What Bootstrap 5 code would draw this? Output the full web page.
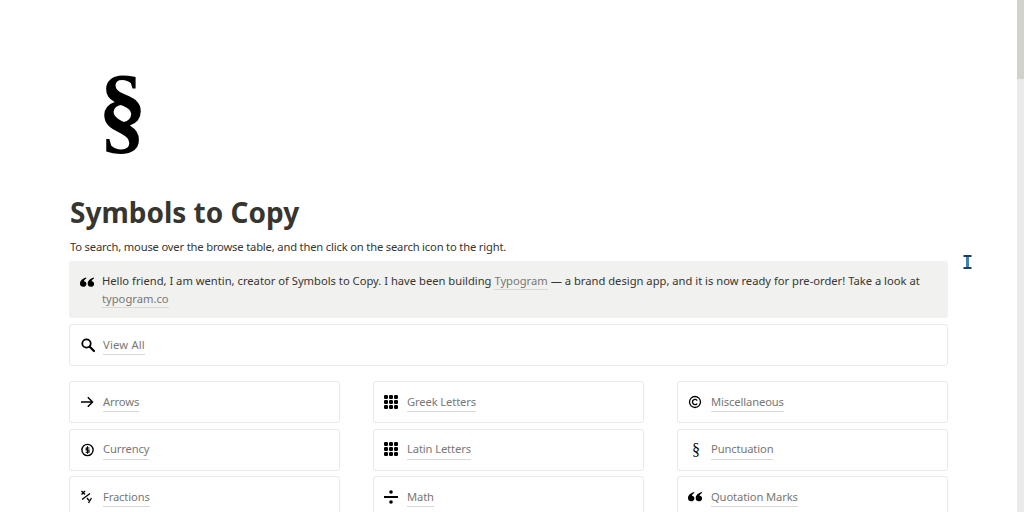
<!DOCTYPE html>
<html lang="en">

<head>
    <meta charset="UTF-8" />
    <meta name="viewport" content="width=device-width, initial-scale=1" />
    <title>Symbols to Copy</title>
    <link href="https://cdn.jsdelivr.net/npm/bootstrap@5.3.0/dist/css/bootstrap.min.css" rel="stylesheet" />
    <style>
        html, body {
            height: 512px;
            overflow: hidden;
        }

        body {
            font-family: "Noto Sans", "Open Sans", sans-serif;
            color: #37352f;
            background: #fff;
        }

        .page-main {
            width: 1017px;
            height: 512px;
            overflow: hidden;
            padding: 72px 69px 0 69px;
        }

        .page-icon {
            height: 84px;
            margin-left: 29px;
            font-family: "Liberation Serif", serif;
            font-weight: 700;
            font-size: 98px;
            line-height: 74px;
            color: #000;
        }

        .page-title {
            font-size: 28px;
            font-weight: 700;
            line-height: 38px;
            margin: 37px 0 0 1px;
        }

        .page-desc {
            font-size: 11.2px;
            letter-spacing: -0.17px;
            line-height: 18px;
            margin: 7px 0 0 1px;
            height: 23px;
        }

        .quote-box {
            background: #f1f1ef;
            border-radius: 3px;
            height: 57px;
            padding: 11px 12px 0 11px;
            font-size: 11.2px;
            line-height: 17.5px;
            margin-bottom: 6px;
        }

        .quote-text {
            color: #37352f;
        }

        .soft-link {
            color: #787774;
            text-decoration: none;
            border-bottom: 1px solid #d9d8d5;
            padding-bottom: 1px;
        }

        .link-tile {
            height: 42px;
            border: 1px solid #e9e9e7;
            border-radius: 3px;
            padding: 0 11px;
            font-size: 11.2px;
            letter-spacing: -0.12px;
            background: #fff;
        }

        .link-tile .soft-link {
            margin-top: 2px;
        }

        .tile-icon {
            width: 22px;
            flex: 0 0 22px;
        }

        .tile-shift {
            padding-left: 10px;
        }

        .tile-shift .tile-icon {
            width: 23px;
            flex-basis: 23px;
        }

        .serif-icon {
            font-family: "Liberation Serif", serif;
            font-size: 16px;
            line-height: 16px;
            color: #000;
            padding-left: 3px;
        }

        .tile-wide {
            margin-bottom: 15px;
            letter-spacing: 0.2px;
        }

        .tile-grid {
            display: grid;
            grid-template-columns: repeat(3, 271px);
            column-gap: 33px;
            row-gap: 5.5px;
        }

        .scroll-track {
            width: 7px;
            height: 512px;
            background: #ebeae8;
        }

        .scroll-thumb {
            height: 79px;
            background: #d3d1cb;
        }

        .text-cursor {
            position: absolute;
            left: 963px;
            top: 255px;
        }
    </style>
</head>

<body>
    <div class="d-flex">
        <main class="page-main">
            <div class="page-icon">§</div>
            <h1 class="page-title">Symbols to Copy</h1>
            <p class="page-desc">To search, mouse over the browse table, and then click on the search icon to the right.</p>

            <div class="quote-box d-flex">
                <div class="tile-icon">
                    <svg width="15" height="18" viewBox="0 0 15 18"><path d="M6 4.500 C2.500 5.500 0 7.800 0 10.500 C0 12.700 1.300 13.800 3.200 13.800 C5 13.800 6.400 12.600 6.400 10.900 C6.400 9.300 5.300 8.300 3.900 8.300 C4.100 7.200 5 6.200 6.400 5.500 Z M13.700 4.500 C10.200 5.500 7.700 7.800 7.700 10.500 C7.700 12.700 9 13.800 10.900 13.800 C12.700 13.800 14.100 12.600 14.100 10.900 C14.100 9.300 13 8.300 11.600 8.300 C11.800 7.200 12.700 6.200 14.100 5.500 Z" /></svg>
                </div>
                <div class="quote-text">Hello friend, I am wentin, creator of Symbols to Copy. I have been building <a class="soft-link" href="#">Typogram</a> — a brand design app, and it is now ready for pre-order! Take a look at <a class="soft-link" href="#">typogram.co</a></div>
            </div>

            <div class="link-tile tile-wide d-flex align-items-center">
                <div class="tile-icon">
                    <svg width="15" height="15" viewBox="0 0 15 15" class="d-block"><circle cx="5.500" cy="5.500" r="4.200" fill="none" stroke="#000" stroke-width="1.800" /><path d="M8.700 8.700 L13 13" stroke="#000" stroke-width="2.200" stroke-linecap="round" /></svg>
                </div>
                <a class="soft-link" href="#">View All</a>
            </div>

            <div class="tile-grid">
                <div class="link-tile d-flex align-items-center">
                    <div class="tile-icon"><svg width="14" height="14" viewBox="0 0 14 14" class="d-block"><path d="M0 7 H11.500 M6.800 2.300 L11.500 7 L6.800 11.700" fill="none" stroke="#000" stroke-width="1.500" /></svg></div>
                    <a class="soft-link" href="#">Arrows</a>
                </div>
                <div class="link-tile tile-shift d-flex align-items-center">
                    <div class="tile-icon"><svg width="15" height="15" viewBox="0 0 15 15" class="d-block" fill="#000"><rect x="0" y="0" width="4" height="4" rx="1.200" /><rect x="5" y="0" width="4" height="4" rx="1.200" /><rect x="10" y="0" width="4" height="4" rx="1.200" /><rect x="0" y="5" width="4" height="4" rx="1.200" /><rect x="5" y="5" width="4" height="4" rx="1.200" /><rect x="10" y="5" width="4" height="4" rx="1.200" /><rect x="0" y="10" width="4" height="4" rx="1.200" /><rect x="5" y="10" width="4" height="4" rx="1.200" /><rect x="10" y="10" width="4" height="4" rx="1.200" /></svg></div>
                    <a class="soft-link" href="#">Greek Letters</a>
                </div>
                <div class="link-tile tile-shift d-flex align-items-center">
                    <div class="tile-icon"><svg width="14" height="14" viewBox="0 0 14 14" class="d-block"><circle cx="7" cy="7" r="5.500" fill="none" stroke="#000" stroke-width="1.300" /><path d="M9.200 5.500 A2.600 2.600 0 1 0 9.200 8.500" fill="none" stroke="#000" stroke-width="1.300" /></svg></div>
                    <a class="soft-link" href="#">Miscellaneous</a>
                </div>

                <div class="link-tile d-flex align-items-center">
                    <div class="tile-icon"><svg width="14" height="14" viewBox="0 0 14 14" class="d-block"><circle cx="6.500" cy="7" r="5.600" fill="none" stroke="#000" stroke-width="1.400" /><path d="M8.500 5 H5.200 V7 H8 V9.200 H4.600 M6.500 3.200 V10.800" fill="none" stroke="#000" stroke-width="1.100" /></svg></div>
                    <a class="soft-link" href="#">Currency</a>
                </div>
                <div class="link-tile tile-shift d-flex align-items-center">
                    <div class="tile-icon"><svg width="15" height="15" viewBox="0 0 15 15" class="d-block" fill="#000"><rect x="0" y="0" width="4" height="4" rx="1.200" /><rect x="5" y="0" width="4" height="4" rx="1.200" /><rect x="10" y="0" width="4" height="4" rx="1.200" /><rect x="0" y="5" width="4" height="4" rx="1.200" /><rect x="5" y="5" width="4" height="4" rx="1.200" /><rect x="10" y="5" width="4" height="4" rx="1.200" /><rect x="0" y="10" width="4" height="4" rx="1.200" /><rect x="5" y="10" width="4" height="4" rx="1.200" /><rect x="10" y="10" width="4" height="4" rx="1.200" /></svg></div>
                    <a class="soft-link" href="#">Latin Letters</a>
                </div>
                <div class="link-tile d-flex align-items-center">
                    <div class="tile-icon serif-icon">§</div>
                    <a class="soft-link" href="#">Punctuation</a>
                </div>

                <div class="link-tile d-flex align-items-center">
                    <div class="tile-icon"><svg width="14" height="15" viewBox="0 0 14 15" class="d-block"><path d="M0.500 1 L4 4.500 M4 1 L0.500 4.500 M1 9.500 L9 3.500" fill="none" stroke="#000" stroke-width="1.300" /><path d="M6 8 L8 10.500 M10.500 8 L7.500 13" fill="none" stroke="#000" stroke-width="1.300" /></svg></div>
                    <a class="soft-link" href="#">Fractions</a>
                </div>
                <div class="link-tile tile-shift d-flex align-items-center">
                    <div class="tile-icon"><svg width="15" height="14" viewBox="0 0 15 14" class="d-block"><circle cx="7" cy="2" r="1.800" /><rect x="0" y="6" width="14" height="2" /><circle cx="7" cy="12" r="1.800" /></svg></div>
                    <a class="soft-link" href="#">Math</a>
                </div>
                <div class="link-tile tile-shift d-flex align-items-center">
                    <div class="tile-icon"><svg width="15" height="10" viewBox="0 0 15 10" class="d-block"><path d="M6 0 C2.500 1 0 3.300 0 6 C0 8.200 1.300 9.300 3.200 9.300 C5 9.300 6.400 8.100 6.400 6.400 C6.400 4.800 5.300 3.800 3.900 3.800 C4.100 2.700 5 1.700 6.400 1 Z M13.700 0 C10.200 1 7.700 3.300 7.700 6 C7.700 8.200 9 9.300 10.900 9.300 C12.700 9.300 14.100 8.100 14.100 6.400 C14.100 4.800 13 3.800 11.600 3.800 C11.800 2.700 12.700 1.700 14.100 1 Z" /></svg></div>
                    <a class="soft-link" href="#">Quotation Marks</a>
                </div>
            </div>
        </main>
        <div class="scroll-track">
            <div class="scroll-thumb"></div>
        </div>
    </div>

    <svg class="text-cursor" width="9" height="14" viewBox="0 0 9 14">
        <path d="M0.500 1 H8.500 M0.500 13 H8.500" stroke="#1f3f5c" stroke-width="2" />
        <path d="M4.500 2 V12" stroke="#3f7fb5" stroke-width="3" />
    </svg>
</body>

</html>
